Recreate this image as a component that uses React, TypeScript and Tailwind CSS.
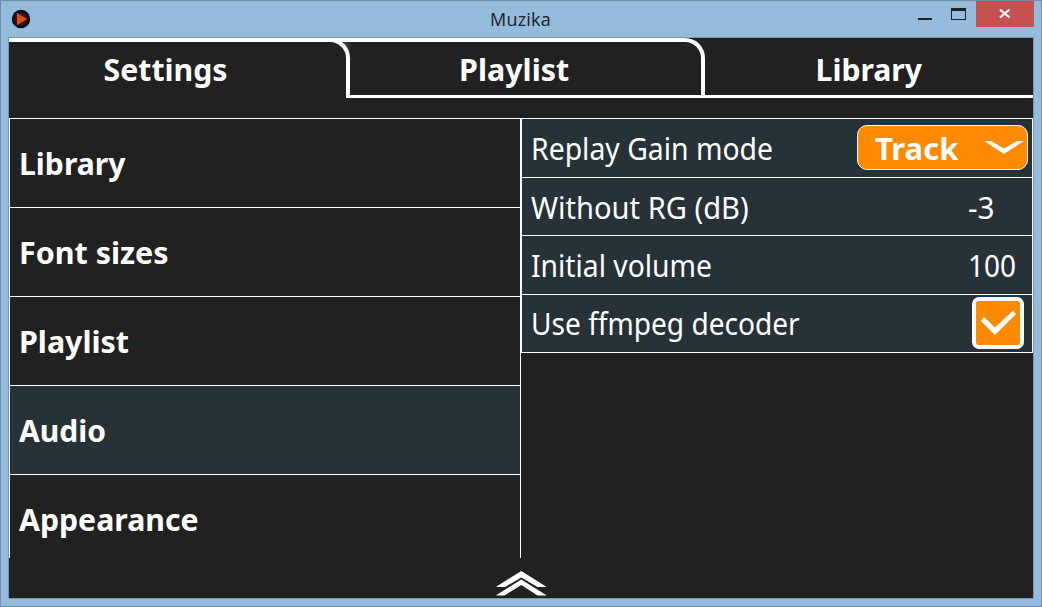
import type { ReactNode } from "react";

const categories = [
  { label: "Library", scale: "scale-x-[0.972]" },
  { label: "Font sizes", scale: "scale-x-[0.982]" },
  { label: "Playlist", scale: "scale-x-[0.98]" },
  { label: "Audio", scale: "scale-x-[0.968]", active: true },
  { label: "Appearance", scale: "scale-x-[0.975]" },
];

function TitleBar() {
  return (
    <header className="flex h-[36px] shrink-0 items-start">
      <svg className="mt-[8px] ml-[10px] h-5 w-5 shrink-0" viewBox="0 0 20 20">
        <defs>
          <radialGradient id="orb">
            <stop offset="0" stopColor="#5a1c3c" />
            <stop offset="0.6" stopColor="#2c1028" />
            <stop offset="1" stopColor="#050208" />
          </radialGradient>
        </defs>
        <circle cx="10" cy="10" r="9.2" fill="url(#orb)" />
        <path d="M6 4v12.2l10.3-6.1z" fill="#e04a14" />
      </svg>
      <h1 className="ml-[459px] w-[425px] pt-[5px] font-['Open_Sans',sans-serif] text-[18px] leading-[26px] tracking-[0.2px] text-[#222]">Muzika</h1>
      <svg className="h-[26px] w-[61px] shrink-0" viewBox="0 0 61 26">
        <path d="M3 17h14v2H3z" fill="#222" />
        <path d="M36 7h15v12H36zM37 10v8h13v-8z" fillRule="evenodd" fill="#222" />
      </svg>
      <button className="flex h-[26px] w-[58px] shrink-0 justify-center bg-[#c75050]">
        <svg className="mt-[7px] h-[12px] w-[14px]" viewBox="0 0 14 12">
          <path d="M2 1.5l9.5 8M11.5 1.5L2 9.5" stroke="#fff" strokeWidth="2.1" fill="none" />
        </svg>
      </button>
    </header>
  );
}

function Tabs() {
  return (
    <nav className="flex h-[60px] shrink-0 text-center text-[31px] leading-[38px] font-bold">
      <div className="w-[341px] border-t-4 border-white bg-[#333]">
        <div className="-mt-1 h-[60px] rounded-tr-[20px] border-t-4 border-r-4 border-white bg-[#212121] pt-[8px] pr-[23px]">
          <span className="inline-block scale-x-[0.975]">Settings</span>
        </div>
      </div>
      <div className="w-[355px] rounded-tr-[20px] border-t-4 border-r-4 border-b-[3px] border-white pt-[8px] pr-[23px]">
        <span className="inline-block scale-x-[0.98]">Playlist</span>
      </div>
      <div className="w-[328px] border-b-[3px] border-white pt-[12px]">
        <span className="inline-block scale-x-[0.972]">Library</span>
      </div>
    </nav>
  );
}

function Row({ label, scale, height, children }: { label: string; scale: string; height: string; children: ReactNode }) {
  return (
    <div className={`${height} flex justify-between border-b border-white bg-[#273138] pl-[9px]`}>
      <span className={`w-[300px] origin-left leading-[38px] whitespace-nowrap ${scale}`}>{label}</span>
      {children}
    </div>
  );
}

export default function App() {
  return (
    <div className="flex h-[607px] w-[1042px] flex-col border border-[#6f8da6] bg-[#94bbdb] font-['Noto_Sans',sans-serif]">
      <TitleBar />
      <main className="mx-[7px] flex h-[562px] flex-col border border-[#7698b4] bg-[#212121] text-white">
        <Tabs />
        <div className="mt-5 flex h-[440px] shrink-0">
          <ul className="w-[512px] overflow-hidden border-x border-t border-white">
            {categories.map((c) => (
              <li key={c.label} className={`h-[89px] border-b border-white pt-[25px] pl-[9px] text-[31px] leading-[38px] font-bold ${c.active ? "bg-[#273138]" : ""}`}>
                <span className={`inline-block origin-left ${c.scale}`}>{c.label}</span>
              </li>
            ))}
          </ul>
          <section className="h-[235px] w-[512px] border-x border-t border-white text-[31px]">
            <Row label="Replay Gain mode" scale="pt-[10px] scale-x-[0.915]" height="h-[59px]">
              <button className="mt-[6px] mr-[4px] flex h-[45px] w-[171px] items-start rounded-[10px] border border-white bg-[#ff8a00] pl-[17px] text-left font-bold">
                <span className="w-[109px] pt-[3px] leading-[38px]">Track</span>
                <svg className="mt-[14px] h-[16px] w-[40px] shrink-0" viewBox="0 0 40 16">
                  <path d="M0 1h7l13 7.5L33 1h7L20 14z" fill="#fff" />
                </svg>
              </button>
            </Row>
            <Row label="Without RG (dB)" scale="pt-[10px] scale-x-[0.938]" height="h-[58px]">
              <span className="w-[64px] origin-left scale-x-[0.96] pt-[10px] leading-[38px]">-3</span>
            </Row>
            <Row label="Initial volume" scale="pt-[10px] scale-x-[0.912]" height="h-[59px]">
              <span className="w-[64px] origin-left scale-x-[0.9] pt-[10px] leading-[38px]">100</span>
            </Row>
            <Row label="Use ffmpeg decoder" scale="pt-[9px] scale-x-[0.906]" height="h-[58px]">
              <span className="mt-[2px] mr-[8px] h-[52px] w-[52px] rounded-[7px] border-4 border-white bg-[#ff8a00]">
                <svg className="h-[44px] w-[44px]" viewBox="0 0 44 44">
                  <path d="M5 20l3-4 11 10.5L37 9.5l3 3.5-21 21z" fill="#fff" />
                </svg>
              </span>
            </Row>
          </section>
        </div>
        <svg className="mt-[12px] ml-[487px] h-[28px] w-[50px] shrink-0" viewBox="0 0 50 28">
          <path d="M25.3 1L50 16.5V17h-8.5L25.3 7.5 9 17H.5v-.5zM25.3 9.5L50 25v.5h-8.5L25.3 15 8.5 25.5H.5V25z" fill="#fff" />
        </svg>
      </main>
    </div>
  );
}
